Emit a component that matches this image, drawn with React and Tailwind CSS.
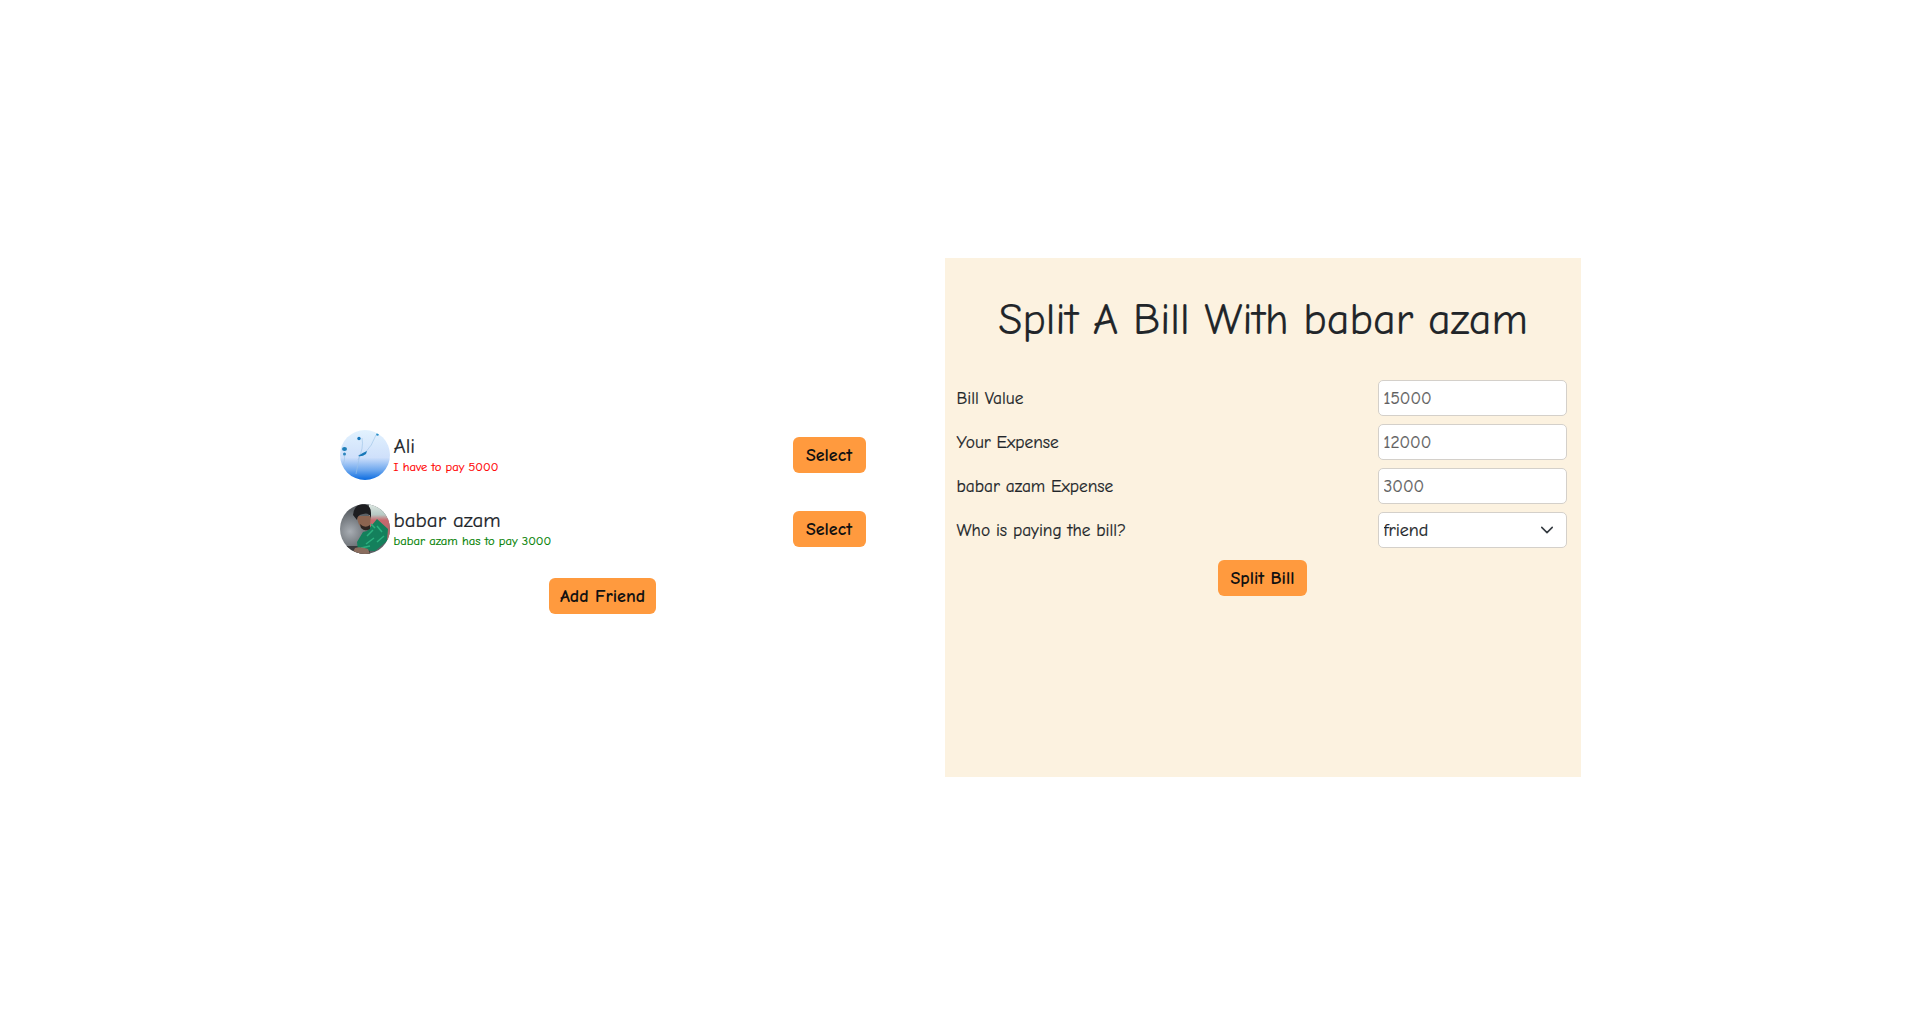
const friends = [
    { id: 1, name: "Ali", note: "I have to pay 5000", noteColor: "text-[#ff0000]" },
    { id: 2, name: "babar azam", note: "babar azam has to pay 3000", noteColor: "text-[#008000]" },
]

const fields = [
    { label: "Bill Value", value: "15000" },
    { label: "Your Expense", value: "12000" },
    { label: "babar azam Expense", value: "3000" },
]

const AliAvatar = () => (
    <svg viewBox="0 0 50 50" className="w-[50px] h-[50px] shrink-0 rounded-full">
        <defs>
            <linearGradient id="sky" x1="0" y1="0" x2="0" y2="1">
                <stop offset="0" stopColor="#e2f2fe" />
                <stop offset="0.55" stopColor="#cfe0fb" />
                <stop offset="0.8" stopColor="#6ea8ee" />
                <stop offset="1" stopColor="#0a6be0" />
            </linearGradient>
        </defs>
        <rect width="50" height="50" fill="url(#sky)" />
        <path d="M22 8 Q24 18 18 30 M36 5 Q32 16 25 23 M4 24 Q6 32 1 36 M20 24 Q18 34 16 44" stroke="#9cc3e6" strokeWidth="0.6" fill="none" />
        <ellipse cx="19" cy="8.500" rx="1.700" ry="1.800" fill="#1878bb" />
        <ellipse cx="37.500" cy="4.500" rx="1.300" ry="1.200" fill="#2a8fc9" />
        <ellipse cx="4.500" cy="19" rx="2.500" ry="2" fill="#1d7db8" />
        <ellipse cx="4.500" cy="24" rx="1.500" ry="1.600" fill="#2e86bf" />
        <path d="M18 26 Q22 23 27 21 L26 24 Q22 27 18 26Z" fill="#1878b8" />
    </svg>
)

const BabarAvatar = () => (
    <svg viewBox="0 0 50 50" className="w-[50px] h-[50px] shrink-0 rounded-full">
        <defs>
            <radialGradient id="blur" cx="0.2" cy="0.55" r="0.42">
                <stop offset="0" stopColor="#a8adb3" />
                <stop offset="1" stopColor="#5b6065" />
            </radialGradient>
            <linearGradient id="backdrop" x1="0" y1="0" x2="0" y2="1">
                <stop offset="0" stopColor="#dfe8e3" />
                <stop offset="0.3" stopColor="#b6c9c3" />
                <stop offset="0.45" stopColor="#c9686e" />
                <stop offset="0.7" stopColor="#b5696c" />
            </linearGradient>
        </defs>
        <rect width="50" height="50" fill="url(#blur)" />
        <rect x="29" y="0" width="21" height="36" fill="url(#backdrop)" />
        <rect y="42" width="30" height="8" fill="#3a3a3c" />
        <path d="M27 27 L37 15 L48 25 L47 37 L35 47 L18 46 L17 38 L23 28Z" fill="#14805c" />
        <path d="M27 32 L33 26 M37 22 L42 28 M26 40 L34 34 M37 38 L44 32 M21 44 L30 42 M31 20 L35 24" stroke="#2cb07f" strokeWidth="1.500" />
        <path d="M15 44 Q20 42 28 45 L30 50 L12 50Z" fill="#8a6d5e" />
        <path d="M17 12 Q17 21 24 26 Q29 27 30 21 L31 12Z" fill="#8c6450" />
        <path d="M13 11 Q14 1 22 0 Q31 0 31 9 L31 14 Q29 8 23 10 Q17 11 17 16Z" fill="#1d1d20" />
        <path d="M20 20 Q25 25 30 21 L30 25 Q25 28 21 24Z" fill="#2d2522" />
    </svg>
)

const btn = "bg-[#ff9a3e] text-[#111] rounded-md font-bold h-9 text-[18px] [-webkit-text-stroke:0px]"

export default function App() {
    return (
        <div
            className="h-[1034px] pt-[258px] flex items-start justify-center gap-[79px] bg-white text-[#212529] [-webkit-text-stroke:0.2px]"
            style={{ fontFamily: '"Comic Sans MS", "Comic Neue", "Noto Sans", sans-serif' }}
        >
            <div className="w-[526px] pt-[172px] flex flex-col gap-6">
                {friends.map((f) => (
                    <div key={f.id} className="flex items-center justify-between">
                        <div className="flex items-center gap-1">
                            {f.id === 1 ? <AliAvatar /> : <BabarAvatar />}
                            <div className="flex flex-col">
                                <span className="text-[21px] leading-6">{f.name}</span>
                                <span className={`text-[12.6px] leading-[18px] ${f.noteColor}`}>{f.note}</span>
                            </div>
                        </div>
                        <button className={`${btn} w-[73px]`}>Select</button>
                    </div>
                ))}
                <div className="flex justify-center">
                    <button className={`${btn} w-[107px]`}>Add Friend</button>
                </div>
            </div>

            <div className="w-[636px] h-[519px] bg-[#fcf2e0] pt-8 pl-3 pr-[14px]">
                <h2 className="text-[44px] leading-[60px] text-center pl-[3px] mb-[30px]">Split A Bill With babar azam</h2>
                <div className="flex flex-col gap-2">
                    {fields.map((f) => (
                        <div key={f.label} className="flex items-center justify-between">
                            <label className="text-[17.4px]">{f.label}</label>
                            <input
                                placeholder={f.value}
                                className="w-[189px] h-9 bg-white border border-[#d4d0ca] rounded-[5px] px-[5px] text-[17.4px] placeholder:text-[#5f5f5f]"
                            />
                        </div>
                    ))}
                    <div className="flex items-center justify-between">
                        <label className="text-[17.4px]">Who is paying the bill?</label>
                        <div className="relative w-[189px]">
                            <select className="w-full h-9 appearance-none bg-white border border-[#d4d0ca] rounded-[5px] px-[5px] text-[18px]">
                                <option>friend</option>
                                <option>you</option>
                            </select>
                            <svg viewBox="0 0 16 16" className="absolute right-[13px] top-[11px] w-[14px] h-[14px] pointer-events-none" fill="none" stroke="#343a40" strokeWidth="1.800" strokeLinecap="round" strokeLinejoin="round">
                                <path d="m2 5 6 6 6-6" />
                            </svg>
                        </div>
                    </div>
                </div>
                <div className="flex justify-center mt-3 pl-[2px]">
                    <button className={`${btn} w-[89px]`}>Split Bill</button>
                </div>
            </div>
        </div>
    )
}
